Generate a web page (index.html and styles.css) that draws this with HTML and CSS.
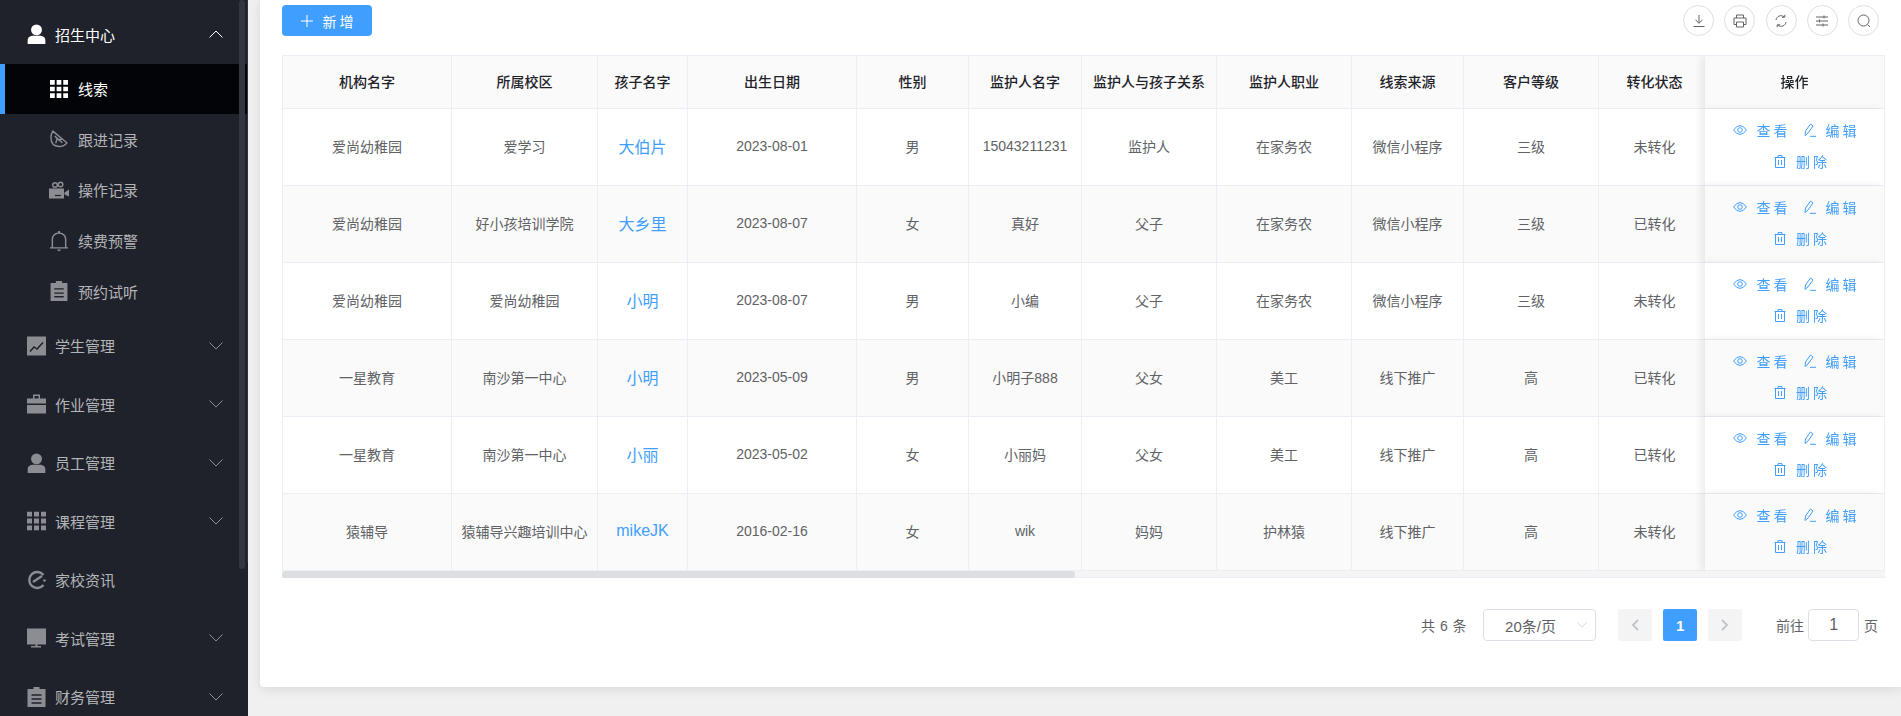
FILE: index.html
```html
<!DOCTYPE html>
<html lang="zh-CN">
<head>
    <meta charset="UTF-8">
    <meta name="viewport" content="width=device-width, initial-scale=1.0">
    <title>线索</title>
    <link rel="stylesheet" href="styles.css">
</head>
<body>

<!-- Shared icons -->
<svg class="defs" width="0" height="0">
    <symbol id="i-user" viewBox="0 0 20 22"><circle cx="10" cy="6.500" r="6"/><path d="M0 22v-3.500q0-4.500 5-5.500h10q5 1 5 5.500V22z"/></symbol>
    <symbol id="i-grid" viewBox="0 0 19 19"><path d="M0 0h5v5H0zM7 0h5v5H7zM14 0h5v5h-5zM0 7h5v5H0zM7 7h5v5H7zM14 7h5v5h-5zM0 14h5v5H0zM7 14h5v5H7zM14 14h5v5h-5z"/></symbol>
    <symbol id="i-down" viewBox="0 0 14 8"><path d="M.5.5 7 7 13.500.5" fill="none" stroke="currentColor"/></symbol>
    <symbol id="i-eye" viewBox="0 0 14 10"><path d="M.6 5Q3.500.6 7 .6T13.400 5Q10.500 9.400 7 9.400T.6 5z" fill="none" stroke="currentColor"/><circle cx="7" cy="5" r="2.300" fill="none" stroke="currentColor"/></symbol>
    <symbol id="i-edit" viewBox="0 0 12 14"><path d="M1 12.500 1.500 8 6.500 1 9 3 4 10zM6 13.300h6" fill="none" stroke="currentColor"/></symbol>
    <symbol id="i-trash" viewBox="0 0 12 13"><path d="M.5 2.500h11M4 2.500V.6h4v1.900M1.500 2.500v10h9v-10M4.500 5v5M7.500 5v5" fill="none" stroke="currentColor"/></symbol>
</svg>

<!-- Side menu -->
<aside class="sidebar">
    <ul class="menu">
        <li class="menu-item open">
            <svg class="menu-icon" viewBox="0 0 20 22"><use href="#i-user"/></svg>
            <span class="menu-text">招生中心</span>
            <svg class="menu-arrow up" viewBox="0 0 14 8"><use href="#i-down"/></svg>
        </li>
        <li class="sub-item active">
            <svg class="sub-icon" viewBox="0 0 19 19"><use href="#i-grid"/></svg>
            <span>线索</span>
        </li>
        <li class="sub-item">
            <svg class="sub-icon" viewBox="0 0 19 19"><path d="M3 1.200 17.800 13.500Q15 17.500 9.500 17.500 1 17 1 8 1 4 3 1.200zM5 6.500 13 13.500M7.500 9.500 6 14M8.500 10.500 12.500 9.500" fill="none" stroke="currentColor" stroke-width="1.500"/></svg>
            <span>跟进记录</span>
        </li>
        <li class="sub-item">
            <svg class="sub-icon wide" viewBox="0 0 20 17"><circle cx="6" cy="3.500" r="2.300" fill="none" stroke="currentColor" stroke-width="1.500"/><circle cx="11.500" cy="3" r="2.300" fill="none" stroke="currentColor" stroke-width="1.500"/><path d="M0 7h15v10H0zM15.500 11 20 8v7l-4.500-2z"/><path d="M6 14h6" stroke="#1f222b" stroke-width="1.200"/></svg>
            <span>操作记录</span>
        </li>
        <li class="sub-item">
            <svg class="sub-icon wide tall" viewBox="0 0 20 21"><path d="M3 17V9q0-6 7-7 7 1 7 7v8M.5 17.700h19" fill="none" stroke="currentColor" stroke-width="1.500"/><path d="M9 0h2v2.500H9zM8.500 19.500h3V21h-3z"/></svg>
            <span>续费预警</span>
        </li>
        <li class="sub-item">
            <svg class="sub-icon tall" viewBox="0 0 16 19"><path d="M0 2h5V0h6v2h5v17H0z"/><path d="M3.500 7.500h9M3.500 11.500h9M3.500 15h9" stroke="#1f222b" stroke-width="1.300"/></svg>
            <span>预约试听</span>
        </li>
        <li class="menu-item">
            <svg class="menu-icon" viewBox="0 0 19 19"><path d="M0 0h19v19H0z"/><path d="M3 15 7 10.500 10 12.500 16 6" fill="none" stroke="#1f222b" stroke-width="1.500"/></svg>
            <span class="menu-text">学生管理</span>
            <svg class="menu-arrow" viewBox="0 0 14 8"><use href="#i-down"/></svg>
        </li>
        <li class="menu-item">
            <svg class="menu-icon" viewBox="0 0 19 19"><path d="M6 0h7v4h6v5H0V4h6zM7.500 1.500V4h4V1.500zM0 10.500h19V19H0z"/></svg>
            <span class="menu-text">作业管理</span>
            <svg class="menu-arrow" viewBox="0 0 14 8"><use href="#i-down"/></svg>
        </li>
        <li class="menu-item">
            <svg class="menu-icon" viewBox="0 0 20 22"><use href="#i-user"/></svg>
            <span class="menu-text">员工管理</span>
            <svg class="menu-arrow" viewBox="0 0 14 8"><use href="#i-down"/></svg>
        </li>
        <li class="menu-item">
            <svg class="menu-icon" viewBox="0 0 19 19"><use href="#i-grid"/></svg>
            <span class="menu-text">课程管理</span>
            <svg class="menu-arrow" viewBox="0 0 14 8"><use href="#i-down"/></svg>
        </li>
        <li class="menu-item">
            <svg class="menu-icon" viewBox="0 0 19 19"><path d="M16.500 4.500A8 8 0 1 0 16.500 14.500" fill="none" stroke="currentColor" stroke-width="2.400"/><path d="M6 11.500 15 5.500" fill="none" stroke="currentColor" stroke-width="2.200"/><circle cx="17.500" cy="10" r="1.300"/></svg>
            <span class="menu-text">家校资讯</span>
        </li>
        <li class="menu-item">
            <svg class="menu-icon" viewBox="0 0 19 19"><path d="M0 0h19v16H0zM8.500 16h2v1.500H14V19H4v-1.500h4.500z"/></svg>
            <span class="menu-text">考试管理</span>
            <svg class="menu-arrow" viewBox="0 0 14 8"><use href="#i-down"/></svg>
        </li>
        <li class="menu-item">
            <svg class="menu-icon" viewBox="0 0 18 20"><path d="M0 2h6V0h6v2h6v18H0z"/><path d="M4 8h10M4 12h10M4 16h10" stroke="#1f222b" stroke-width="1.300"/></svg>
            <span class="menu-text">财务管理</span>
            <svg class="menu-arrow" viewBox="0 0 14 8"><use href="#i-down"/></svg>
        </li>
    </ul>
    <div class="sidebar-thumb"></div>
</aside>

<main class="content">
    <div class="card">
        <div class="toolbar">
            <button class="btn-add">
                <svg class="btn-plus" viewBox="0 0 12 12"><path d="M6 0v12M0 6h12" stroke="currentColor" fill="none"/></svg>
                <span>新增</span>
            </button>
            <div class="tools">
                <span class="tool"><svg viewBox="0 0 14 14"><path d="M7 1v8M3.500 5.800 7 9.300l3.500-3.500M1.500 12.500h11" fill="none" stroke="currentColor"/></svg></span>
                <span class="tool"><svg viewBox="0 0 14 14"><path d="M3.500 4V1h7v3M3.500 10.500H1V4h12v6.500h-2.500M3.500 8h7v5h-7z" fill="none" stroke="currentColor"/></svg></span>
                <span class="tool"><svg viewBox="0 0 14 14"><path d="M2 6A5 5 0 0 1 10 2.700M12 8A5 5 0 0 1 4 11.300M7.800 3.200h3V.8M6.200 10.800h-3v2.400" fill="none" stroke="currentColor"/></svg></span>
                <span class="tool"><svg viewBox="0 0 14 14"><path d="M1 3h12M1 7h12M1 11h12M9 1.500v3M4.500 5.500v3M8 9.500v3" fill="none" stroke="currentColor"/></svg></span>
                <span class="tool"><svg viewBox="0 0 14 14"><circle cx="6.500" cy="6.500" r="5.500" fill="none" stroke="currentColor"/><path d="M10.500 10.500 13 13" fill="none" stroke="currentColor"/></svg></span>
            </div>
        </div>

        <div class="table-wrap">
            <table class="data-table">
                <colgroup>
                    <col class="w169"><col class="w146"><col class="w90"><col class="w169"><col class="w112"><col class="w113"><col class="w135"><col class="w135"><col class="w112"><col class="w135"><col class="w112"><col class="w179">
                </colgroup>
                <thead>
                    <tr><th>机构名字</th><th>所属校区</th><th>孩子名字</th><th>出生日期</th><th>性别</th><th>监护人名字</th><th>监护人与孩子关系</th><th>监护人职业</th><th>线索来源</th><th>客户等级</th><th>转化状态</th><th class="fixed">操作</th></tr>
                </thead>
                <tbody id="rows"></tbody>
            </table>
        </div>
        <div class="table-scroll"><div class="table-scroll-thumb"></div></div>

        <div class="pager">
            <span class="pager-total">共 6 条</span>
            <div class="pager-size">
                <span>20条/页</span>
                <svg class="pager-caret" viewBox="0 0 14 8"><use href="#i-down"/></svg>
            </div>
            <span class="pager-btn"><svg viewBox="0 0 8 12"><path d="M7 1 2 6l5 5" fill="none" stroke="currentColor" stroke-width="1.800"/></svg></span>
            <span class="pager-btn current">1</span>
            <span class="pager-btn"><svg viewBox="0 0 8 12"><path d="M1 1l5 5-5 5" fill="none" stroke="currentColor" stroke-width="1.800"/></svg></span>
            <span class="pager-goto">前往</span>
            <span class="pager-input">1</span>
            <span class="pager-page">页</span>
        </div>
    </div>
</main>

<script src="rows.js"></script>
</body>
</html>
```

FILE: rows.js
```js
const rows = [
    ['爱尚幼稚园', '爱学习', '大伯片', '2023-08-01', '男', '15043211231', '监护人', '在家务农', '微信小程序', '三级', '未转化'],
    ['爱尚幼稚园', '好小孩培训学院', '大乡里', '2023-08-07', '女', '真好', '父子', '在家务农', '微信小程序', '三级', '已转化'],
    ['爱尚幼稚园', '爱尚幼稚园', '小明', '2023-08-07', '男', '小编', '父子', '在家务农', '微信小程序', '三级', '未转化'],
    ['一星教育', '南沙第一中心', '小明', '2023-05-09', '男', '小明子888', '父女', '美工', '线下推广', '高', '已转化'],
    ['一星教育', '南沙第一中心', '小丽', '2023-05-02', '女', '小丽妈', '父女', '美工', '线下推广', '高', '已转化'],
    ['猿辅导', '猿辅导兴趣培训中心', 'mikeJK', '2016-02-16', '女', 'wik', '妈妈', '护林猿', '线下推广', '高', '未转化']
];

// Action links are the same in every row
const actions = `
    <div class="op-row">
        <a class="op"><svg class="op-eye" viewBox="0 0 14 10"><use href="#i-eye"/></svg>查看</a>
        <a class="op"><svg class="op-edit" viewBox="0 0 12 14"><use href="#i-edit"/></svg>编辑</a>
    </div>
    <div class="op-row op-row-del">
        <a class="op"><svg class="op-trash" viewBox="0 0 12 13"><use href="#i-trash"/></svg>删除</a>
    </div>`;

document.getElementById('rows').innerHTML = rows.map(row => {
    const cells = row.map((text, i) => `<td${i === 2 ? ' class="name"' : ''}>${text}</td>`).join('');
    return `<tr>${cells}<td class="fixed">${actions}</td></tr>`;
}).join('');
```

FILE: styles.css
```css
* {
    box-sizing: border-box;
}
html, body {
    height: 716px;
    overflow: hidden;
}
body {
    margin: 0;
    display: flex;
    background-color: #f0f0f0;
    font-family: "Liberation Sans", "Noto Sans CJK SC", sans-serif;
    font-size: 14px;
    color: #606266;
}
.defs {
    position: absolute;
}

/* Side menu */
.sidebar {
    position: relative;
    flex: 0 0 248px;
    height: 716px;
    overflow: hidden;
    background-color: #1f222b;
    padding-top: 5px;
}
.menu {
    list-style: none;
    margin: 0;
    padding: 0;
    font-size: 15px;
    color: #b4b5b8;
}
.menu-item {
    display: flex;
    align-items: center;
    height: 58.500px;
    padding-left: 27px;
    color: #8b8d92;
}
.menu-item.open {
    color: #fff;
}
.menu-icon {
    flex: none;
    width: 19px;
    height: 20px;
    fill: currentColor;
}
.menu-text {
    margin-left: 9px;
    color: #b4b5b8;
}
.open .menu-text {
    color: #fff;
}
.menu-arrow {
    flex: none;
    width: 14px;
    height: 8px;
    margin-left: auto;
    margin-right: 25px;
}
.menu-arrow.up {
    transform: rotate(180deg);
}
.sub-item {
    display: flex;
    align-items: center;
    height: 50.600px;
    padding-left: 50px;
    color: #8b8d92;
}
.sub-item span {
    margin-left: 10px;
    color: #b4b5b8;
}
.sub-item.active {
    background-color: #030407;
    border-left: 5px solid #409eff;
    padding-left: 45px;
    color: #fff;
}
.sub-item.active span {
    color: #fff;
}
.sub-icon {
    flex: none;
    width: 18px;
    height: 18px;
    fill: currentColor;
}
.sub-icon.wide {
    width: 20px;
    margin: 0 -1px;
}
.sub-icon.tall {
    height: 20px;
}
.sidebar-thumb {
    position: absolute;
    top: 0;
    right: 3px;
    width: 6px;
    height: 569px;
    border-radius: 3px;
    background-color: #33363f;
}
.sidebar-thumb::after {
    content: "";
    position: absolute;
    top: 0;
    left: 8px;
    width: 1px;
    height: 562px;
    background-color: #33363f;
}

/* Main card */
.content {
    flex: 1;
    min-width: 0;
    padding-left: 12px;
}
.card {
    height: 687px;
    padding: 5px 16px 0 22px;
    background-color: #fff;
    border-radius: 0 0 0 4px;
    box-shadow: 0 2px 12px rgba(0, 0, 0, 0.1);
}
.toolbar {
    display: flex;
    justify-content: space-between;
    height: 31px;
    margin-bottom: 19px;
    padding-right: 6px;
}
.btn-add {
    display: flex;
    align-items: center;
    justify-content: center;
    width: 90px;
    height: 31px;
    padding: 0 0 0 3px;
    border: 0;
    border-radius: 4px;
    background-color: #409eff;
    color: #fff;
    font-family: inherit;
    font-size: 14px;
    letter-spacing: 3px;
}
.btn-plus {
    width: 12px;
    height: 12px;
    margin-right: 10px;
}
.tools {
    display: flex;
    gap: 10.250px;
}
.tool {
    display: flex;
    align-items: center;
    justify-content: center;
    width: 31px;
    height: 31px;
    border: 1px solid #dcdfe6;
    border-radius: 50%;
    color: #606266;
}
.tool svg {
    width: 14px;
    height: 14px;
}

/* Table */
.table-wrap {
    overflow: hidden;
    border-top: 1px solid #ebeef5;
    border-left: 1px solid #ebeef5;
    border-right: 1px solid #ebeef5;
}
.data-table {
    table-layout: fixed;
    width: 1607px;
    border-spacing: 0;
    text-align: center;
}
.w169 { width: 169px; }
.w146 { width: 146px; }
.w90 { width: 90px; }
.w112 { width: 112px; }
.w113 { width: 113px; }
.w135 { width: 135px; }
.w179 { width: 179px; }
.data-table th,
.data-table td {
    padding: 0;
    border-right: 1px solid #ebeef5;
    border-bottom: 1px solid #ebeef5;
}
.data-table th {
    height: 53px;
    padding-bottom: 2px;
    background-color: #fafafa;
    color: #1f2329;
    font-weight: 500;
}
.data-table td {
    height: 77px;
    padding-bottom: 3px;
    background-color: #fff;
}
.data-table tbody tr:nth-child(even) td {
    background-color: #fafafa;
}
.data-table .name {
    font-size: 16px;
    color: #409eff;
}
.data-table .fixed {
    position: sticky;
    right: 0;
    border-right: 0;
    box-shadow: -4px 0 8px rgba(0, 0, 0, 0.08);
}
.op-row {
    display: flex;
    justify-content: center;
    gap: 13px;
    height: 31px;
    align-items: center;
    padding-left: 3px;
}
.op-row-del {
    padding-left: 15px;
}
.op {
    display: flex;
    align-items: center;
    color: #409eff;
    letter-spacing: 3px;
}
.op svg {
    margin-right: 10px;
}
.op-eye {
    width: 14px;
    height: 10px;
}
.op-edit {
    width: 12px;
    height: 14px;
}
.op-trash {
    width: 12px;
    height: 13px;
}
.table-scroll {
    height: 7px;
    background-color: #f5f5f6;
    border-bottom: 1px solid #ebeef5;
}
.table-scroll-thumb {
    width: 793px;
    height: 7px;
    border-radius: 3px;
    background-color: #dddee1;
}

/* Pagination */
.pager {
    display: flex;
    align-items: center;
    height: 32px;
    margin-top: 31px;
    padding-left: 1139px;
}
.pager-total {
    margin-right: 16px;
    letter-spacing: 0.5px;
}
.pager-size {
    display: flex;
    align-items: center;
    justify-content: space-between;
    width: 113px;
    height: 32px;
    padding: 0 8px 0 21px;
    border: 1px solid #dcdfe6;
    border-radius: 4px;
    margin-right: 22px;
    font-size: 15px;
}
.pager-caret {
    width: 10px;
    height: 6px;
    color: #c0c4cc;
}
.pager-btn {
    display: flex;
    align-items: center;
    justify-content: center;
    width: 34px;
    height: 32px;
    margin-right: 11px;
    border-radius: 2px;
    background-color: #f4f4f5;
    color: #c0c4cc;
}
.pager-btn svg {
    width: 8px;
    height: 12px;
}
.pager-btn.current {
    background-color: #409eff;
    color: #fff;
    font-weight: bold;
    font-size: 15px;
}
.pager-goto {
    margin-left: 23px;
    margin-right: 4px;
}
.pager-input {
    width: 51px;
    height: 32px;
    line-height: 30px;
    text-align: center;
    border: 1px solid #dcdfe6;
    border-radius: 4px;
    font-size: 16px;
}
.pager-page {
    margin-left: 5px;
}
```
